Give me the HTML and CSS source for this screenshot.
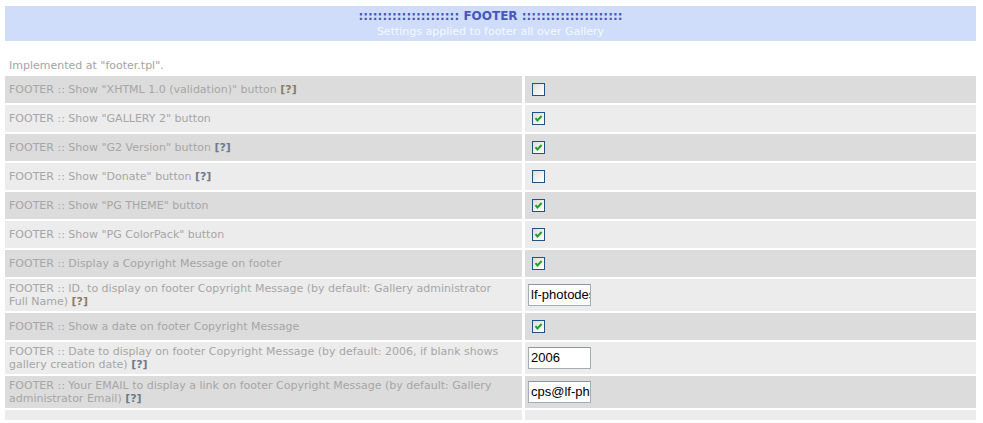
FILE: index.html
```html
<!DOCTYPE html>
<html>
<head>
<meta charset="utf-8">
<link rel="stylesheet" href="styles.css">
</head>
<body>
<div class="page">
  <div class="banner">
    <div class="banner-title">::::::::::::::::::::: FOOTER :::::::::::::::::::::</div>
    <div class="banner-sub">Settings applied to footer all over Gallery</div>
  </div>
  <div class="note">Implemented at "footer.tpl".</div>
  <div class="grid">
    <div class="lbl dark">FOOTER :: Show "XHTML 1.0 (validation)" button <b class="help brown">[?]</b></div>
    <div class="val dark"><span class="cb"></span></div>

    <div class="lbl light">FOOTER :: Show "GALLERY 2" button</div>
    <div class="val light"><span class="cb on"><svg viewBox="0 0 11 11"><path d="M2.5 5.2 L4.4 7.4 L8.6 3" /></svg></span></div>

    <div class="lbl dark">FOOTER :: Show "G2 Version" button <b class="help">[?]</b></div>
    <div class="val dark"><span class="cb on"><svg viewBox="0 0 11 11"><path d="M2.5 5.2 L4.4 7.4 L8.6 3" /></svg></span></div>

    <div class="lbl light">FOOTER :: Show "Donate" button <b class="help">[?]</b></div>
    <div class="val light"><span class="cb"></span></div>

    <div class="lbl dark">FOOTER :: Show "PG THEME" button</div>
    <div class="val dark"><span class="cb on"><svg viewBox="0 0 11 11"><path d="M2.5 5.2 L4.4 7.4 L8.6 3" /></svg></span></div>

    <div class="lbl light">FOOTER :: Show "PG ColorPack" button</div>
    <div class="val light"><span class="cb on"><svg viewBox="0 0 11 11"><path d="M2.5 5.2 L4.4 7.4 L8.6 3" /></svg></span></div>

    <div class="lbl dark">FOOTER :: Display a Copyright Message on footer</div>
    <div class="val dark"><span class="cb on"><svg viewBox="0 0 11 11"><path d="M2.5 5.2 L4.4 7.4 L8.6 3" /></svg></span></div>

    <div class="lbl light tall">FOOTER :: ID. to display on footer Copyright Message (by default: Gallery administrator Full Name) <b class="help brown">[?]</b></div>
    <div class="val light tall"><span class="txt">lf-photodesign</span></div>

    <div class="lbl dark">FOOTER :: Show a date on footer Copyright Message</div>
    <div class="val dark"><span class="cb on"><svg viewBox="0 0 11 11"><path d="M2.5 5.2 L4.4 7.4 L8.6 3" /></svg></span></div>

    <div class="lbl light tall">FOOTER :: Date to display on footer Copyright Message (by default: 2006, if blank shows gallery creation date) <b class="help">[?]</b></div>
    <div class="val light tall"><span class="txt">2006</span></div>

    <div class="lbl dark tall">FOOTER :: Your EMAIL to display a link on footer Copyright Message (by default: Gallery administrator Email) <b class="help">[?]</b></div>
    <div class="val dark tall"><span class="txt">cps@lf-photodesign.com</span></div>

    <div class="lbl light last"></div>
    <div class="val light last"></div>
  </div>
</div>
</body>
</html>
```
FILE: styles.css
```css
html, body {
  margin: 0;
  padding: 0;
  background: #ffffff;
}
body {
  font-family: "DejaVu Sans", Verdana, sans-serif;
  font-size: 11px;
}
.page {
  padding: 6px 7px 0 5px;
}
.banner {
  background: #cfddfb;
  height: 35px;
  display: flex;
  flex-direction: column;
  align-items: center;
  justify-content: center;
}
.banner-title {
  color: #4658bc;
  font-weight: bold;
  font-size: 12px;
  line-height: 15px;
}
.banner-sub {
  color: #f6f8ff;
  font-size: 11px;
  line-height: 13px;
  padding-top: 1px;
}
.note {
  color: #a4a4a4;
  padding: 18px 0 0 4px;
  height: 17px;
  line-height: 13px;
}
.grid {
  display: grid;
  grid-template-columns: 517px 1fr;
  column-gap: 3px;
  row-gap: 2px;
}
.lbl, .val {
  min-height: 27px;
  display: flex;
  align-items: center;
  box-sizing: border-box;
}
.lbl {
  color: #a6a6a6;
  padding: 0 14px 0 4px;
  line-height: 13px;
  display: block;
  padding-top: 7px;
}
.lbl.tall {
  padding-top: 3px;
  min-height: 32px;
}
.val {
  padding-left: 7px;
}
.val.tall {
  padding-left: 3px;
}
.dark { background: #dcdcdc; }
.light { background: #ececec; }
.last { min-height: 10px; height: 10px; padding: 0; }
.help {
  color: #6f7b8c;
  font-weight: bold;
}
.help.brown { color: #8c7c6a; }
.cb {
  width: 11px;
  height: 11px;
  border: 1px solid #1d5385;
  background: linear-gradient(135deg, #dcdcd6 0%, #f4f4f2 60%, #ffffff 100%);
  display: inline-block;
  position: relative;
}
.cb svg {
  width: 11px;
  height: 11px;
  display: block;
}
.cb svg path {
  fill: none;
  stroke: #21a121;
  stroke-width: 2;
}
.txt {
  width: 58px;
  height: 20px;
  border: 1px solid #a5acb2;
  border-top-color: #8e959b;
  background: #ffffff;
  font-family: "Liberation Sans", Arial, sans-serif;
  font-size: 13px;
  line-height: 20px;
  color: #000;
  padding: 0 1px 0 2px;
  overflow: hidden;
  white-space: nowrap;
  display: block;
}
```
